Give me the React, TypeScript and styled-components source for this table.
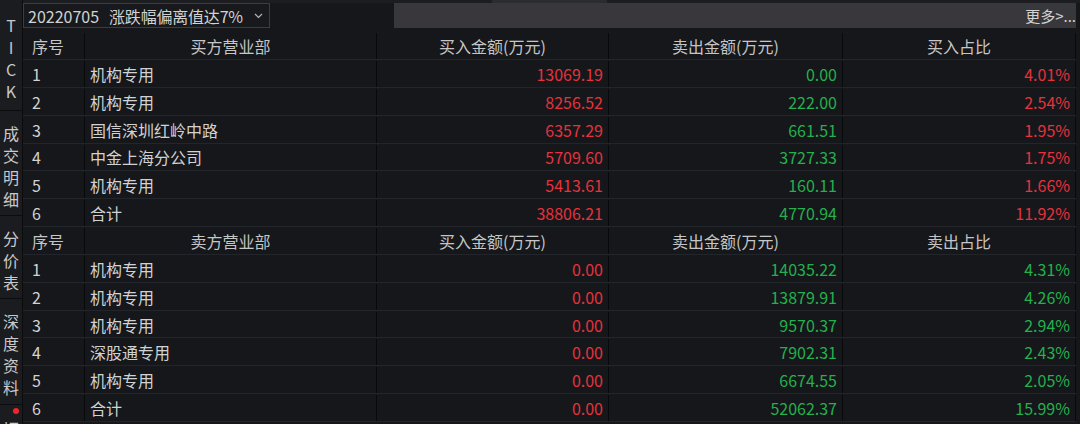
import React from 'react';
import styled, { createGlobalStyle } from 'styled-components';

const RED = '#e5323c';
const GREEN = '#24b04c';

const GlobalStyle = createGlobalStyle`
    body {
        margin: 0;
        background: #15171b;
        font-family: "Noto Sans CJK SC", "Noto Sans", sans-serif;
        overflow: hidden;
    }
`;

type Row = [string, string, string, string, string];

const buyRows: Row[] = [
    ['1', '机构专用', '13069.19', '0.00', '4.01%'],
    ['2', '机构专用', '8256.52', '222.00', '2.54%'],
    ['3', '国信深圳红岭中路', '6357.29', '661.51', '1.95%'],
    ['4', '中金上海分公司', '5709.60', '3727.33', '1.75%'],
    ['5', '机构专用', '5413.61', '160.11', '1.66%'],
    ['6', '合计', '38806.21', '4770.94', '11.92%']
];

const sellRows: Row[] = [
    ['1', '机构专用', '0.00', '14035.22', '4.31%'],
    ['2', '机构专用', '0.00', '13879.91', '4.26%'],
    ['3', '机构专用', '0.00', '9570.37', '2.94%'],
    ['4', '深股通专用', '0.00', '7902.31', '2.43%'],
    ['5', '机构专用', '0.00', '6674.55', '2.05%'],
    ['6', '合计', '0.00', '52062.37', '15.99%']
];

const tabs = [
    { label: 'TICK', height: 111 },
    { label: '成交明细', height: 105 },
    { label: '分价表', height: 83 },
    { label: '深度资料', height: 106 }
];

function App() {
    return (
        <Page>
            <GlobalStyle />
            <SideBar>
                {tabs.map(tab => (
                    <SideTab key={tab.label} $height={tab.height}>
                        {tab.label.split('').map((ch, i) => (
                            <span key={i}>{ch}</span>
                        ))}
                    </SideTab>
                ))}
                <LastTab>
                    <RedDot />
                    <span>切</span>
                </LastTab>
            </SideBar>
            <Main>
                <Strip>
                    <StripTab />
                </Strip>
                <TopBar>
                    <Dropdown>
                        <span>20220705</span>
                        <DropLabel>涨跌幅偏离值达7%</DropLabel>
                        <svg width="9" height="6" viewBox="0 0 9 6">
                            <path d="M1 1l3.5 3.5L8 1" fill="none" stroke="#b8b8b8" strokeWidth="1.1" />
                        </svg>
                    </Dropdown>
                    <MoreBar>更多&gt;...</MoreBar>
                </TopBar>
                <Table>
                    <HeadRow $first>
                        <Cell>序号</Cell>
                        <Cell $align="center">买方营业部</Cell>
                        <Cell $align="center">买入金额(万元)</Cell>
                        <Cell $align="center">卖出金额(万元)</Cell>
                        <Cell $align="center">买入占比</Cell>
                    </HeadRow>
                    {buyRows.map(r => (
                        <DataRow key={'b' + r[0]}>
                            <Cell>{r[0]}</Cell>
                            <NameCell>{r[1]}</NameCell>
                            <Cell $align="right" $color={RED}>{r[2]}</Cell>
                            <Cell $align="right" $color={GREEN}>{r[3]}</Cell>
                            <Cell $align="right" $color={RED}>{r[4]}</Cell>
                        </DataRow>
                    ))}
                    <HeadRow>
                        <Cell>序号</Cell>
                        <Cell $align="center">卖方营业部</Cell>
                        <Cell $align="center">买入金额(万元)</Cell>
                        <Cell $align="center">卖出金额(万元)</Cell>
                        <Cell $align="center">卖出占比</Cell>
                    </HeadRow>
                    {sellRows.map(r => (
                        <DataRow key={'s' + r[0]}>
                            <Cell>{r[0]}</Cell>
                            <NameCell>{r[1]}</NameCell>
                            <Cell $align="right" $color={RED}>{r[2]}</Cell>
                            <Cell $align="right" $color={GREEN}>{r[3]}</Cell>
                            <Cell $align="right" $color={GREEN}>{r[4]}</Cell>
                        </DataRow>
                    ))}
                </Table>
            </Main>
        </Page>
    );
}

const Page = styled.div`
    display: flex;
    width: 1080px;
    height: 424px;
    overflow: hidden;
    background: #15171b;
    color: #d2d2d2;
`;

const SideBar = styled.nav`
    width: 22px;
    flex-shrink: 0;
    display: flex;
    flex-direction: column;
    background: #1a1c20;
    border-right: 1px solid #0b0c0e;
`;

const SideTab = styled.div<{ $height: number }>`
    height: ${p => p.$height}px;
    flex-shrink: 0;
    box-sizing: border-box;
    display: flex;
    flex-direction: column;
    align-items: center;
    justify-content: center;
    padding-top: 5px;
    border-bottom: 1px solid #0b0c0e;
    font-size: 16px;
    line-height: 22px;
    color: #c9c9c9;
`;

const LastTab = styled.div`
    position: relative;
    flex: 1;
    display: flex;
    flex-direction: column;
    align-items: center;
    padding-top: 12px;
    font-size: 16px;
    line-height: 22px;
    color: #c9c9c9;
`;

const RedDot = styled.i`
    position: absolute;
    top: 3px;
    left: 13px;
    width: 6px;
    height: 6px;
    border-radius: 50%;
    background: #f0242c;
`;

const Main = styled.main`
    flex: 1;
    display: flex;
    flex-direction: column;
    min-width: 0;
`;

const Strip = styled.div`
    height: 3px;
    display: flex;
    background: #1b1d21;
`;

const StripTab = styled.div`
    margin-left: 469px;
    width: 115px;
    background: #2a2c30;
`;

const TopBar = styled.div`
    height: 25px;
    display: flex;
    gap: 124px;
    padding-right: 4px;
`;

const Dropdown = styled.div`
    width: 247px;
    box-sizing: border-box;
    display: flex;
    align-items: center;
    gap: 10px;
    padding: 0 6px 0 4px;
    border: 1px solid #3a3d43;
    background: #17191d;
    font-size: 16px;
    color: #d2d2d2;
    white-space: nowrap;

    svg {
        margin-left: auto;
    }
`;

const DropLabel = styled.span`
    letter-spacing: -0.2px;
`;

const MoreBar = styled.div`
    flex: 1;
    display: flex;
    align-items: center;
    justify-content: flex-end;
    background: #37373c;
    font-size: 15px;
    color: #d2d2d2;
`;

const Table = styled.section`
    margin: 2px 4px 0 0;
    display: flex;
    flex-direction: column;
`;

const BaseRow = styled.div`
    display: grid;
    grid-template-columns: 62px 292px 232px 234px 233px;
    box-sizing: border-box;
    border-bottom: 1px solid #22252a;
    font-size: 16px;
`;

const HeadRow = styled(BaseRow)<{ $first?: boolean }>`
    height: ${p => (p.$first ? '30px' : '27.85px')};
    padding-top: ${p => (p.$first ? '3px' : '1px')};
    color: #c6c6c6;
`;

const DataRow = styled(BaseRow)`
    height: 27.85px;
    padding-top: 1px;
`;

const Cell = styled.div<{ $align?: 'left' | 'center' | 'right'; $color?: string }>`
    display: flex;
    align-items: center;
    justify-content: ${p =>
        p.$align === 'center' ? 'center' : p.$align === 'right' ? 'flex-end' : 'flex-start'};
    padding: 0 ${p => (p.$align === 'right' ? '5px' : '0')} 0 ${p => (p.$align ? '0' : '9px')};
    border-right: 1px solid #08090b;
    color: ${p => p.$color || 'inherit'};
    white-space: nowrap;
    overflow: hidden;
`;

const NameCell = styled(Cell)`
    padding-left: 5px;
`;

export default App;
